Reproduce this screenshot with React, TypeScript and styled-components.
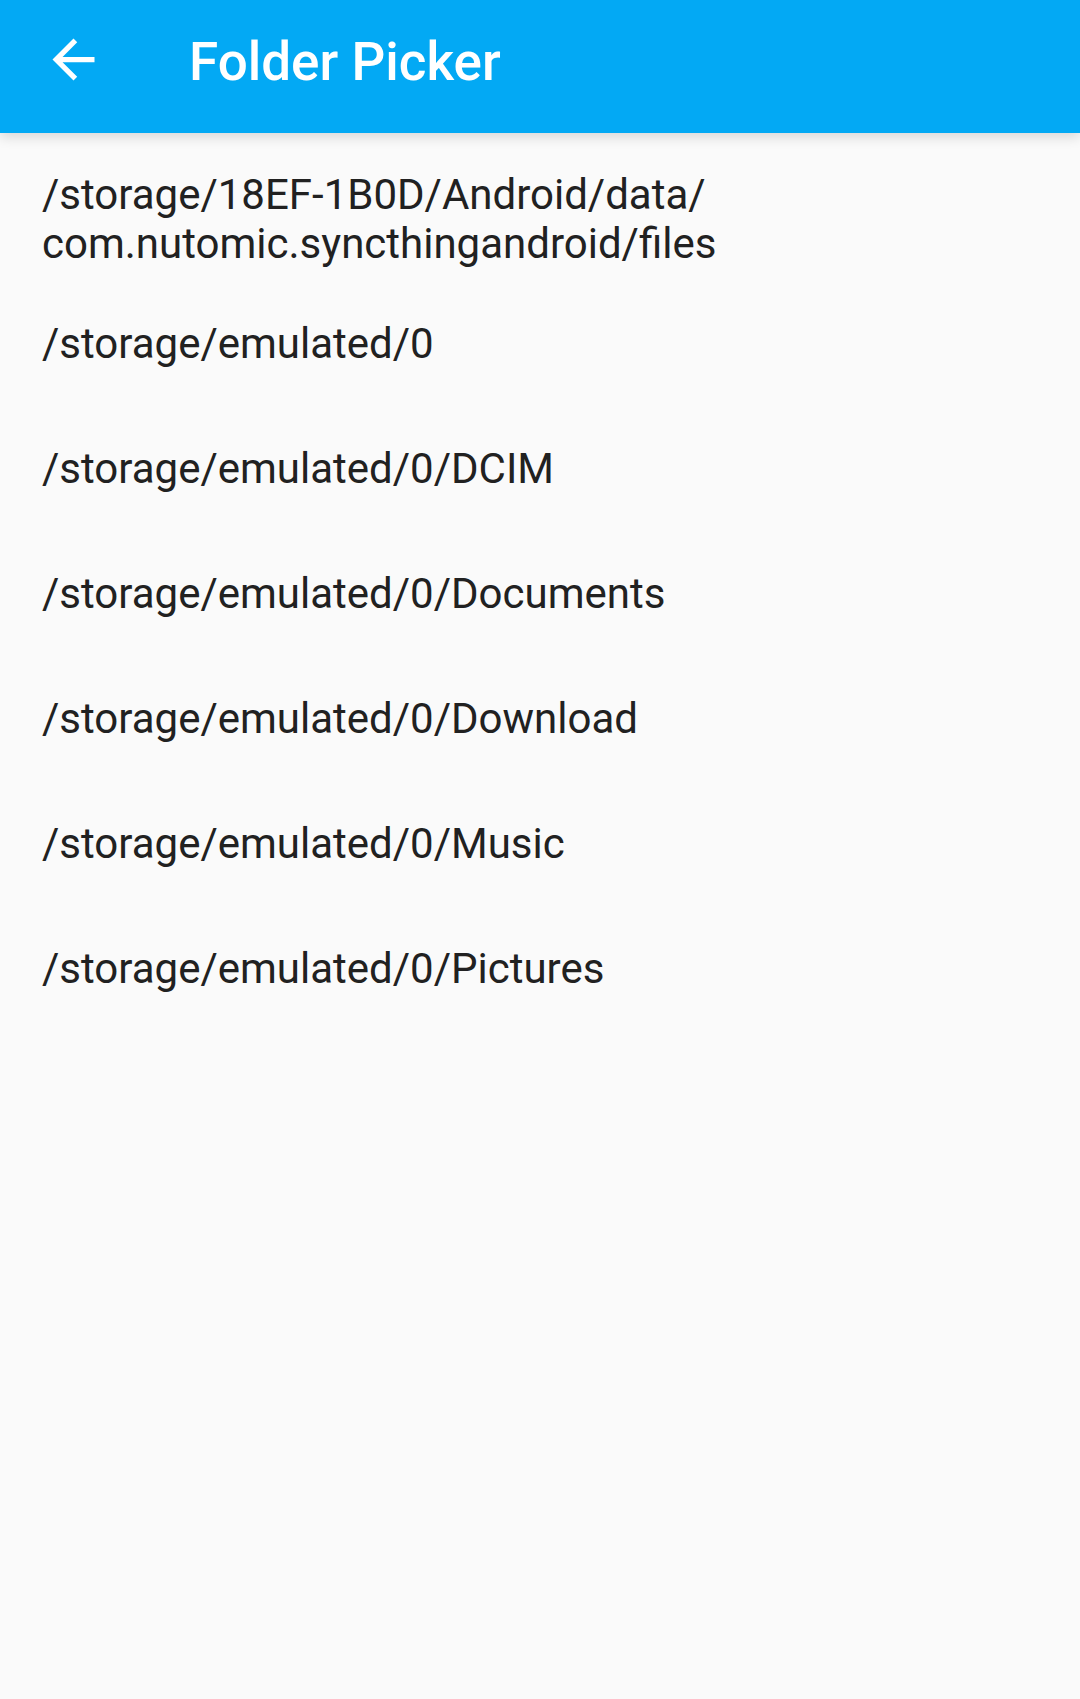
import React from "react";
import styled, { createGlobalStyle } from "styled-components";

const GlobalStyle = createGlobalStyle`
  * { box-sizing: border-box; }
  body {
    margin: 0;
    background: #fafafa;
    color: #212121;
    font-family: Roboto, "Noto Sans", sans-serif;
  }
`;

const Screen = styled.div`
  min-height: 100vh;
  display: flex;
  flex-direction: column;
`;

const Toolbar = styled.header`
  display: flex;
  align-items: flex-start;
  gap: 84px;
  padding: 28px 42px 37px;
  background: #03a9f4;
  color: #fff;
  box-shadow: 0 4px 12px rgba(0, 0, 0, 0.14);
`;

const BackButton = styled.button`
  display: flex;
  padding: 0;
  border: 0;
  background: none;
  color: inherit;
  cursor: pointer;
`;

const Title = styled.h1`
  margin: 0;
  font-size: 53px;
  line-height: 68px;
  font-weight: 500;
`;

const FolderList = styled.ul`
  margin: 0;
  padding: 23px 0 0;
  list-style: none;
`;

const FolderButton = styled.button`
  display: flex;
  align-items: center;
  width: 100%;
  min-height: 125px;
  padding: 0 42px;
  border: 0;
  background: none;
  color: inherit;
  font-family: inherit;
  font-size: 42px;
  line-height: 49px;
  text-align: left;
  cursor: pointer;
`;

const folders = [
  ["/storage/18EF-1B0D/Android/data/", "com.nutomic.syncthingandroid/files"],
  ["/storage/emulated/0"],
  ["/storage/emulated/0/DCIM"],
  ["/storage/emulated/0/Documents"],
  ["/storage/emulated/0/Download"],
  ["/storage/emulated/0/Music"],
  ["/storage/emulated/0/Pictures"],
];

export default function App() {
  return (
    <Screen>
      <GlobalStyle />
      <Toolbar>
        <BackButton type="button" aria-label="Navigate up">
          <svg width="63" height="63" viewBox="0 0 24 24" fill="currentColor" aria-hidden="true">
            <path d="M20 11H7.83l5.59-5.59L12 4l-8 8 8 8 1.41-1.41L7.83 13H20v-2z" />
          </svg>
        </BackButton>
        <Title>Folder Picker</Title>
      </Toolbar>
      <FolderList>
        {folders.map((lines) => (
          <li key={lines.join("")}>
            <FolderButton type="button">
              <span>
                {lines.map((line, i) => (
                  <React.Fragment key={line}>
                    {i > 0 && <br />}
                    {line}
                  </React.Fragment>
                ))}
              </span>
            </FolderButton>
          </li>
        ))}
      </FolderList>
    </Screen>
  );
}
